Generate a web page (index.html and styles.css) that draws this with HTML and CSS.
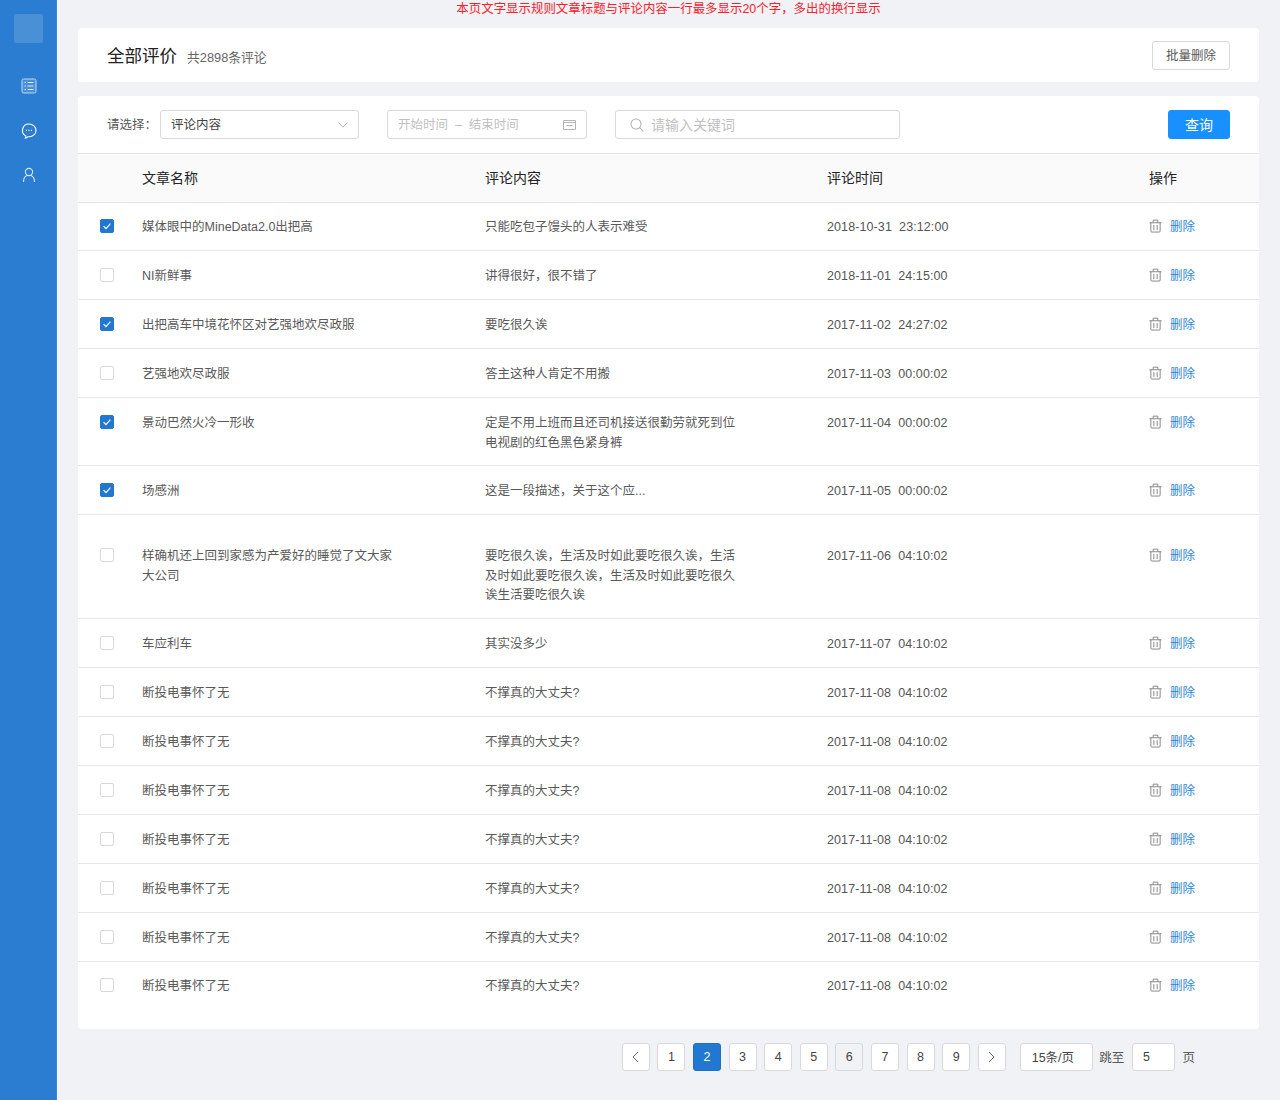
FILE: index.html
```html
<!DOCTYPE html>
<html lang="zh">
<head>
    <meta charset="UTF-8">
    <meta name="viewport" content="width=device-width, initial-scale=1.0">
    <title>全部评价</title>
    <link rel="stylesheet" href="styles.css">
</head>
<body>
    <svg class="defs" width="0" height="0">
        <symbol id="trash" viewBox="0 0 14 14">
            <path d="M.5 3.5h13M2 3.5v9a1 1 0 0 0 1 1h8a1 1 0 0 0 1-1v-9M4.5 3.3V.7h5v2.6M5.2 6v5.5M8.8 6v5.5" fill="none" stroke="currentColor"/>
        </symbol>
        <symbol id="tick" viewBox="0 0 14 14">
            <path d="M3 7.2l2.8 2.8L11 4.2" fill="none" stroke="#fff" stroke-width="1.4"/>
        </symbol>
    </svg>

    <aside class="sidebar">
        <div class="logo"></div>
        <svg class="nav-icon" viewBox="0 0 16 16" width="16" height="16">
            <rect x="1" y="1" width="14" height="14" rx="1.5" fill="rgba(255,255,255,0.15)" stroke="#bcd8f3"/>
            <path d="M3.5 4.5h1.5M6.5 4.5h6M3.5 8h1.5M6.5 8h6M3.5 11.5h1.5M6.5 11.5h6" stroke="#d6e7f8"/>
        </svg>
        <svg class="nav-icon" viewBox="0 0 16 16" width="16" height="16">
            <path d="M8 1a7 6.4 0 0 1 0 12.8H6.8c-.6.5-1.4.9-2.3 1.2.3-.7.4-1.3.3-2A6.4 6.4 0 0 1 8 1z" fill="none" stroke="#fff" stroke-width="1.1"/>
            <path d="M5 7.4h1M7.5 7.4h1M10 7.4h1" stroke="#fff" stroke-width="1.2"/>
        </svg>
        <svg class="nav-icon" viewBox="0 0 16 16" width="16" height="16">
            <circle cx="8" cy="5" r="3.6" fill="none" stroke="#d6e7f8" stroke-width="1.1"/>
            <path d="M2.5 15c0-3.4 2-5.8 3.6-6.4M13.5 15c0-3.4-2-5.8-3.6-6.4" fill="none" stroke="#d6e7f8" stroke-width="1.1"/>
        </svg>
    </aside>

    <main class="main">
        <p class="notice">本页文字显示规则文章标题与评论内容一行最多显示20个字，多出的换行显示</p>

        <section class="card title-card">
            <div class="title-text">
                <h1>全部评价</h1>
                <span class="count">共2898条评论</span>
            </div>
            <button class="btn">批量删除</button>
        </section>

        <section class="card list-card">
            <div class="filters">
                <label class="filter-label">请选择：</label>
                <div class="field select">
                    <span>评论内容</span>
                    <svg viewBox="0 0 10 6" width="10" height="6"><path d="M.5.5L5 5.2 9.5.5" fill="none" stroke="#b5b5b5"/></svg>
                </div>
                <div class="field date placeholder">
                    <span>开始时间&nbsp; –&nbsp; 结束时间</span>
                    <svg viewBox="0 0 13 11" width="13" height="11"><path d="M.5 1.5h12v9H.5zM.5 3.5h12M3.5 6.5h6" fill="none" stroke="#b5b5b5"/></svg>
                </div>
                <div class="field search placeholder">
                    <svg viewBox="0 0 14 14" width="14" height="14"><circle cx="6" cy="6" r="5" fill="none" stroke="#b5b5b5" stroke-width="1.1"/><path d="M9.7 9.7l3.6 3.6" stroke="#b5b5b5" stroke-width="1.1"/></svg>
                    <span>请输入关键词</span>
                </div>
                <button class="btn btn-primary">查询</button>
            </div>

            <div class="row head">
                <span></span>
                <span>文章名称</span>
                <span>评论内容</span>
                <span>评论时间</span>
                <span>操作</span>
            </div>

            <div class="row">
                <span class="check on"><svg><use href="#tick"/></svg></span>
                <span class="cell">媒体眼中的MineData2.0出把高</span>
                <span class="cell">只能吃包子馒头的人表示难受</span>
                <span class="cell time">2018-10-31  23:12:00</span>
                <span class="ops"><svg><use href="#trash"/></svg><a>删除</a></span>
            </div>
            <div class="row">
                <span class="check"></span>
                <span class="cell">NI新鲜事</span>
                <span class="cell">讲得很好，很不错了</span>
                <span class="cell time">2018-11-01  24:15:00</span>
                <span class="ops"><svg><use href="#trash"/></svg><a>删除</a></span>
            </div>
            <div class="row">
                <span class="check on"><svg><use href="#tick"/></svg></span>
                <span class="cell">出把高车中境花怀区对艺强地欢尽政服</span>
                <span class="cell">要吃很久诶</span>
                <span class="cell time">2017-11-02  24:27:02</span>
                <span class="ops"><svg><use href="#trash"/></svg><a>删除</a></span>
            </div>
            <div class="row">
                <span class="check"></span>
                <span class="cell">艺强地欢尽政服</span>
                <span class="cell">答主这种人肯定不用搬</span>
                <span class="cell time">2017-11-03  00:00:02</span>
                <span class="ops"><svg><use href="#trash"/></svg><a>删除</a></span>
            </div>
            <div class="row double">
                <span class="check on"><svg><use href="#tick"/></svg></span>
                <span class="cell">景动巴然火冷一形收</span>
                <span class="cell">定是不用上班而且还司机接送很勤劳就死到位电视剧的红色黑色紧身裤</span>
                <span class="cell time">2017-11-04  00:00:02</span>
                <span class="ops"><svg><use href="#trash"/></svg><a>删除</a></span>
            </div>
            <div class="row">
                <span class="check on"><svg><use href="#tick"/></svg></span>
                <span class="cell">场感洲</span>
                <span class="cell">这是一段描述，关于这个应...</span>
                <span class="cell time">2017-11-05  00:00:02</span>
                <span class="ops"><svg><use href="#trash"/></svg><a>删除</a></span>
            </div>
            <div class="row tall">
                <span class="check"></span>
                <span class="cell">样确机还上回到家感为产爱好的睡觉了文大家大公司</span>
                <span class="cell">要吃很久诶，生活及时如此要吃很久诶，生活及时如此要吃很久诶，生活及时如此要吃很久诶生活要吃很久诶</span>
                <span class="cell time">2017-11-06  04:10:02</span>
                <span class="ops"><svg><use href="#trash"/></svg><a>删除</a></span>
            </div>
            <div class="row">
                <span class="check"></span>
                <span class="cell">车应利车</span>
                <span class="cell">其实没多少</span>
                <span class="cell time">2017-11-07  04:10:02</span>
                <span class="ops"><svg><use href="#trash"/></svg><a>删除</a></span>
            </div>
            <div class="row">
                <span class="check"></span>
                <span class="cell">断投电事怀了无</span>
                <span class="cell">不撑真的大丈夫?</span>
                <span class="cell time">2017-11-08  04:10:02</span>
                <span class="ops"><svg><use href="#trash"/></svg><a>删除</a></span>
            </div>
            <div class="row">
                <span class="check"></span>
                <span class="cell">断投电事怀了无</span>
                <span class="cell">不撑真的大丈夫?</span>
                <span class="cell time">2017-11-08  04:10:02</span>
                <span class="ops"><svg><use href="#trash"/></svg><a>删除</a></span>
            </div>
            <div class="row">
                <span class="check"></span>
                <span class="cell">断投电事怀了无</span>
                <span class="cell">不撑真的大丈夫?</span>
                <span class="cell time">2017-11-08  04:10:02</span>
                <span class="ops"><svg><use href="#trash"/></svg><a>删除</a></span>
            </div>
            <div class="row">
                <span class="check"></span>
                <span class="cell">断投电事怀了无</span>
                <span class="cell">不撑真的大丈夫?</span>
                <span class="cell time">2017-11-08  04:10:02</span>
                <span class="ops"><svg><use href="#trash"/></svg><a>删除</a></span>
            </div>
            <div class="row">
                <span class="check"></span>
                <span class="cell">断投电事怀了无</span>
                <span class="cell">不撑真的大丈夫?</span>
                <span class="cell time">2017-11-08  04:10:02</span>
                <span class="ops"><svg><use href="#trash"/></svg><a>删除</a></span>
            </div>
            <div class="row">
                <span class="check"></span>
                <span class="cell">断投电事怀了无</span>
                <span class="cell">不撑真的大丈夫?</span>
                <span class="cell time">2017-11-08  04:10:02</span>
                <span class="ops"><svg><use href="#trash"/></svg><a>删除</a></span>
            </div>
            <div class="row">
                <span class="check"></span>
                <span class="cell">断投电事怀了无</span>
                <span class="cell">不撑真的大丈夫?</span>
                <span class="cell time">2017-11-08  04:10:02</span>
                <span class="ops"><svg><use href="#trash"/></svg><a>删除</a></span>
            </div>
        </section>

        <nav class="pager">
            <a class="page"><svg viewBox="0 0 7 12" width="7" height="12"><path d="M6 1L1 6l5 5" fill="none" stroke="#666"/></svg></a>
            <a class="page">1</a>
            <a class="page active">2</a>
            <a class="page">3</a>
            <a class="page">4</a>
            <a class="page">5</a>
            <a class="page hover">6</a>
            <a class="page">7</a>
            <a class="page">8</a>
            <a class="page">9</a>
            <a class="page"><svg viewBox="0 0 7 12" width="7" height="12"><path d="M1 1l5 5-5 5" fill="none" stroke="#666"/></svg></a>
            <span class="page size">15条/页</span>
            <span class="jump">跳至</span>
            <span class="page jump-input">5</span>
            <span class="jump-end">页</span>
        </nav>
    </main>
</body>
</html>
```

FILE: styles.css
```css
* {
    box-sizing: border-box;
}
body {
    font-family: "Liberation Sans", "Noto Sans CJK SC", sans-serif;
    font-size: 12.5px;
    color: #595959;
    background: #f0f2f5;
    margin: 0;
    display: flex;
    min-height: 1100px;
}
.defs {
    position: absolute;
}
.sidebar {
    width: 57px;
    flex: none;
    background: #2a7dd0;
    border-right: 1px solid #3b86d3;
    display: flex;
    flex-direction: column;
    align-items: center;
    padding: 14px 0 0 1px;
}
.logo {
    width: 29px;
    height: 29px;
    border-radius: 2px;
    background: rgba(255, 255, 255, 0.15);
    margin-bottom: 35px;
}
.nav-icon {
    margin-bottom: 28.5px;
}
.main {
    flex: 1;
    padding: 0 21px;
    min-width: 0;
}
.notice {
    margin: 0;
    height: 28px;
    line-height: 19px;
    font-size: 12.45px;
    text-align: center;
    color: #f5222d;
}
.card {
    background: #fff;
    border-radius: 4px;
}
.title-card {
    height: 54px;
    padding: 0 29px;
    display: flex;
    align-items: center;
    justify-content: space-between;
    margin-bottom: 14px;
}
.title-text {
    display: flex;
    align-items: baseline;
    gap: 10px;
    margin-top: -2px;
}
h1 {
    margin: 0;
    font-size: 17.5px;
    font-weight: 400;
    color: #222;
}
.count {
    color: #666;
    font-size: 12.8px;
}
.btn {
    font: inherit;
    height: 29px;
    width: 78px;
    padding: 0 0 2px;
    background: #fff;
    color: #595959;
    border: 1px solid #d9d9d9;
    border-radius: 3px;
}
.btn-primary {
    width: 62px;
    margin-left: auto;
    background: #1890ff;
    border-color: #1890ff;
    color: #fff;
    font-size: 14px;
}
.list-card {
    padding-bottom: 20px;
}
.filters {
    height: 57px;
    padding: 0 29px;
    display: flex;
    align-items: center;
}
.filter-label {
    width: 53px;
    padding-bottom: 2px;
}
.field {
    height: 29px;
    border: 1px solid #d9d9d9;
    border-radius: 3px;
    display: flex;
    align-items: center;
    justify-content: space-between;
    padding: 0 10px 2px;
    color: #444;
}
.field svg {
    margin-top: 2px;
}
.placeholder {
    color: #bfbfbf;
}
.select {
    width: 199px;
    margin-right: 28px;
}
.date {
    width: 200px;
    margin-right: 28px;
}
.search {
    width: 285px;
    justify-content: flex-start;
    gap: 7px;
    padding-left: 14px;
    font-size: 14px;
}
.row {
    display: grid;
    grid-template-columns: 64px 343px 342px 322px 1fr;
    align-items: start;
    padding: 16px 0 12.5px;
    border-bottom: 1px solid #e8e8e8;
    line-height: 19.5px;
}
.head + .row,
.row:last-child {
    padding-top: 15px;
}
.row:last-child {
    border-bottom: none;
}
.head {
    height: 50px;
    padding: 1px 0 0;
    align-items: center;
    background: #fafafa;
    border-top: 1px solid #e4e4e4;
    border-bottom: 1px solid #e4e4e4;
    font-size: 14px;
    color: #222;
}
.double {
    padding-bottom: 12px;
}
.tall {
    padding: 32px 0 12.5px;
}
.check {
    width: 14px;
    height: 14px;
    margin: 1px 0 0 22px;
    background: #fff;
    border: 1px solid #d9d9d9;
    border-radius: 2px;
    display: block;
}
.check.on {
    background: #2278d0;
    border-color: #2278d0;
}
.check svg {
    display: block;
    width: 12px;
    height: 12px;
}
.cell {
    max-width: 250px;
}
.time {
    max-width: none;
    white-space: pre;
    letter-spacing: 0.1px;
    color: #555;
}
.ops {
    display: flex;
    align-items: flex-start;
    gap: 8px;
    color: #7f7f7f;
}
.ops svg {
    width: 13px;
    height: 14px;
    margin-top: 1px;
}
.ops a {
    color: #2d85dc;
}
.pager {
    display: flex;
    align-items: center;
    margin-top: 14px;
    padding-right: 64px;
    justify-content: flex-end;
    gap: 7.6px;
}
.page {
    width: 28px;
    height: 28px;
    background: #fff;
    border: 1px solid #d9d9d9;
    border-radius: 3px;
    display: flex;
    align-items: center;
    justify-content: center;
    padding-bottom: 1px;
    color: #444;
}
.active {
    background: #2278d0;
    border-color: #1f70c4;
    color: #fff;
}
.hover {
    background: #f0f2f5;
}
.size {
    width: 73px;
    margin-left: 6.4px;
    justify-content: flex-start;
    padding-left: 11px;
}
.jump {
    margin-left: -1px;
    padding-bottom: 2px;
}
.jump-end {
    padding-bottom: 2px;
}
.jump-input {
    width: 43px;
    justify-content: flex-start;
    padding-left: 10px;
}
```
